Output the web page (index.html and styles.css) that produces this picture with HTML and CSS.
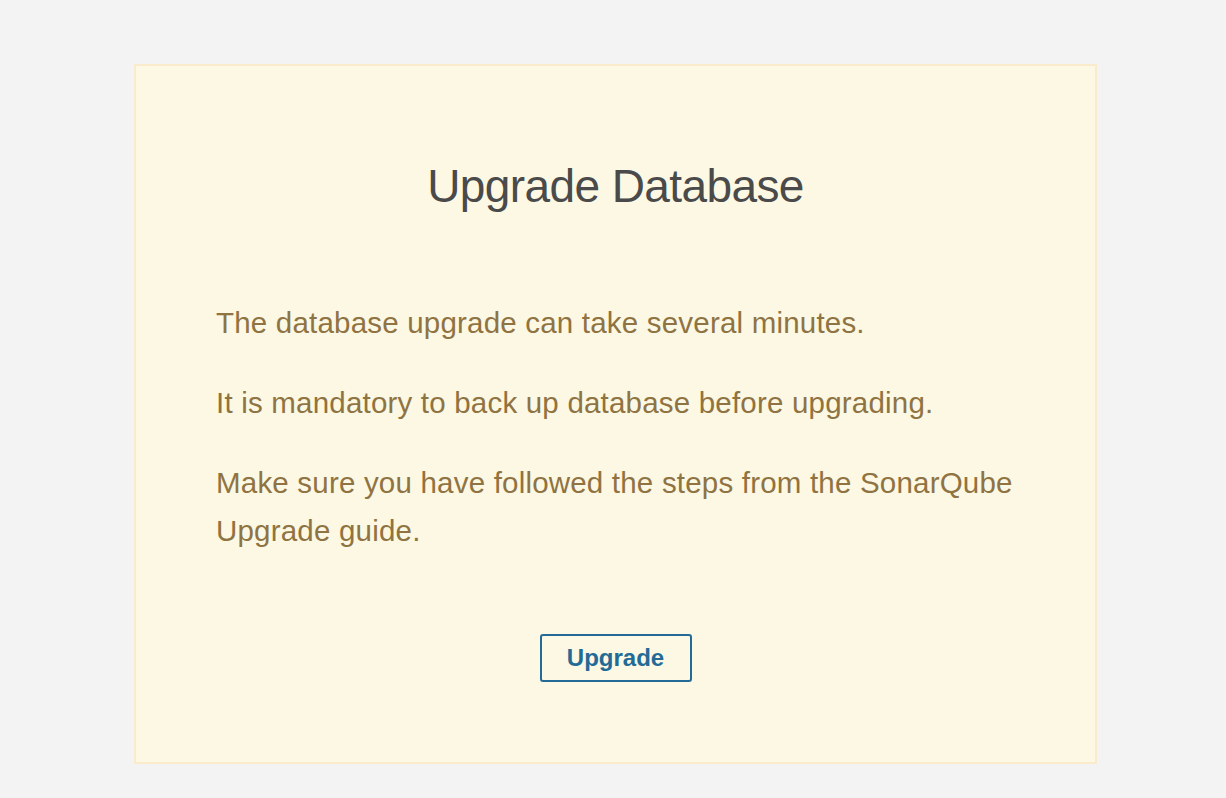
FILE: index.html
```html
<!DOCTYPE html>
<html lang="en">
<head>
<meta charset="utf-8">
<title>Upgrade Database</title>
<link rel="stylesheet" href="styles.css">
</head>
<body>
<div class="page">
  <div class="alert">
    <h1 class="title">Upgrade Database</h1>
    <p class="text">The database upgrade can take several minutes.</p>
    <p class="text">It is mandatory to back up database before upgrading.</p>
    <p class="text">Make sure you have followed the steps from the SonarQube Upgrade guide.</p>
    <div class="actions">
      <button class="btn" type="button">Upgrade</button>
    </div>
  </div>
</div>
</body>
</html>
```
FILE: styles.css
```css
html, body {
  margin: 0;
  padding: 0;
}
body {
  background: #f3f3f3;
  font-family: "Liberation Sans", Arial, sans-serif;
  min-height: 798px;
}
.page {
  padding-top: 64px;
}
.alert {
  box-sizing: border-box;
  width: 963px;
  margin: 0 0 0 134px;
  background: #fcf8e3;
  border: 2px solid #faebcc;
  padding: 93px 80px 80px;
}
.title {
  margin: 0 0 86px;
  text-align: center;
  font-weight: normal;
  font-size: 46px;
  letter-spacing: -0.6px;
  line-height: 54px;
  color: #4a4a4a;
}
.text {
  margin: 0 -4px 32px 0;
  font-size: 29.5px;
  letter-spacing: 0.2px;
  line-height: 48px;
  color: #8f7342;
}
.text:last-of-type {
  margin-bottom: 0;
}
.actions {
  margin-top: 79px;
  display: flex;
  justify-content: center;
}
.btn {
  box-sizing: border-box;
  width: 152px;
  height: 48px;
  border: 2px solid #236a97;
  border-radius: 3px;
  background: transparent;
  color: #236a97;
  font-family: "Liberation Sans", Arial, sans-serif;
  font-weight: bold;
  font-size: 24px;
  padding: 0;
  cursor: pointer;
}
```
